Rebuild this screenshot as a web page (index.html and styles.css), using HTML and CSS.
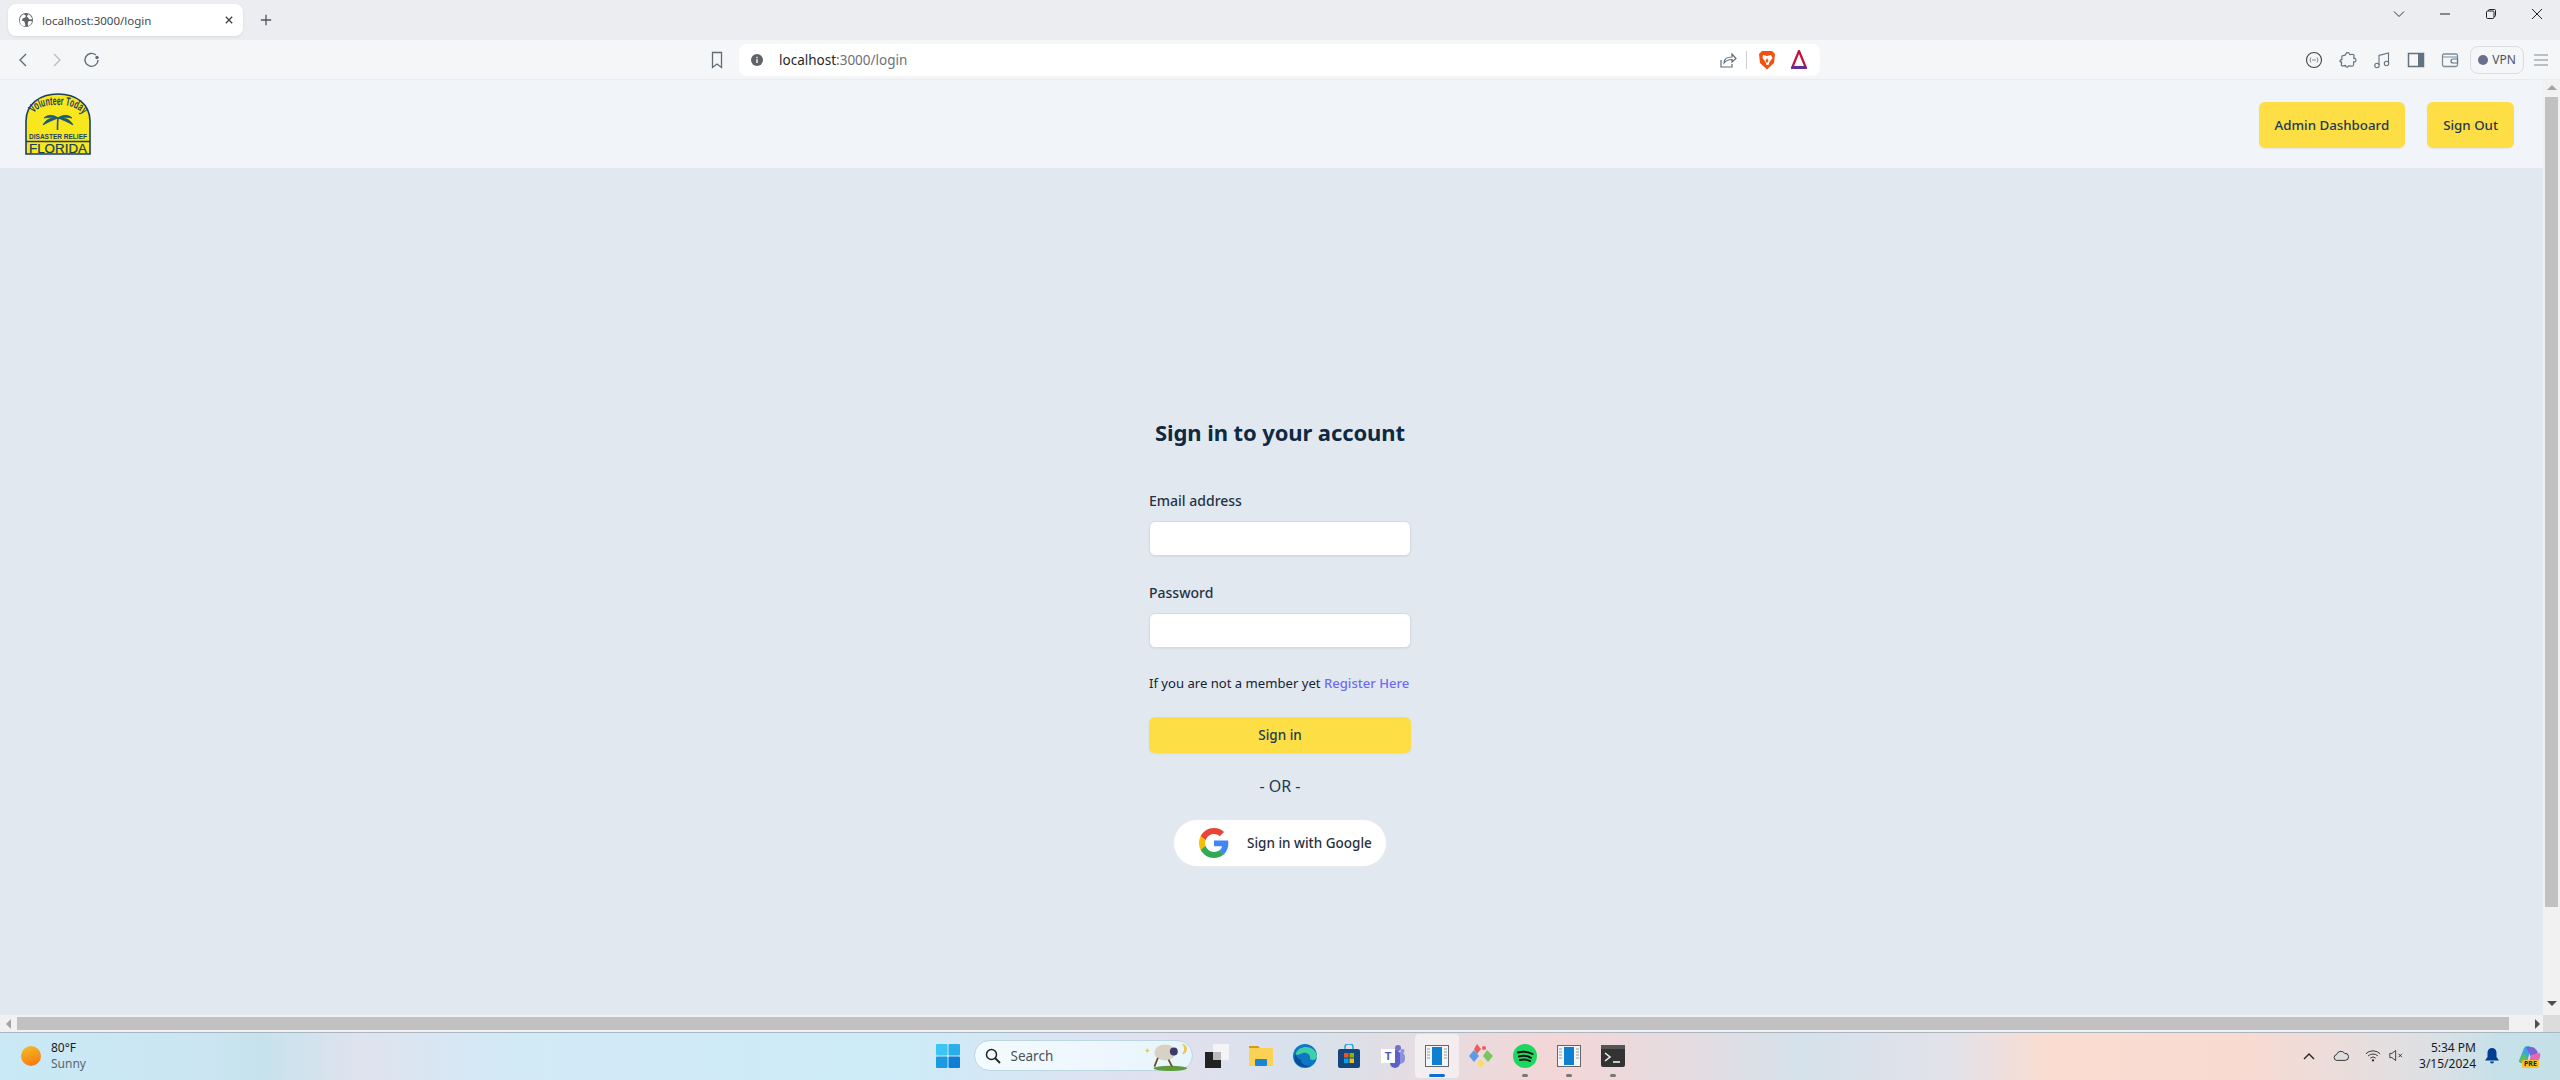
FILE: index.html
```html
<!DOCTYPE html>
<html lang="en">
<head>
<meta charset="utf-8">
<title>localhost:3000/login</title>
<link rel="stylesheet" href="styles.css">
</head>
<body>
<div class="tabstrip">
  <div class="tab">
    <svg class="tab-globe" viewBox="0 0 16 16"><circle cx="8" cy="8" r="8" fill="#5f6368"/><path d="M5.500 1.500L8 3 7 5 4.500 6 3 8.500l3 1 1 3 .5 2.500C5 15.500 2.500 14 1.300 11 .3 7 2 3 5.500 1.500zM10.500 1.500c2.500 1 4 3 4.500 5.500l-3 .5-1.500-2-1.500-1.500zM11 9l4 .5c-.5 2.500-2 4.500-4.500 5.500L10 12z" fill="#fff"/></svg>
    <span class="tab-title">localhost:3000/login</span>
    <svg class="tab-close" viewBox="0 0 10 10"><path d="M1 1l8 8M9 1l-8 8" stroke="#3c4043" stroke-width="1.600"/></svg>
  </div>
  <svg class="tab-new" viewBox="0 0 14 14"><path d="M7 1v12M1 7h12" stroke="#50565c" stroke-width="1.500"/></svg>
  <div class="winctl">
    <svg class="win-btn" viewBox="0 0 12 12"><path d="M1 3.500l5 5 5-5" fill="none" stroke="#333" stroke-width="1"/></svg>
    <svg class="win-btn" viewBox="0 0 12 12"><path d="M1 6h10" stroke="#222" stroke-width="1"/></svg>
    <svg class="win-btn" viewBox="0 0 12 12"><rect x="1.500" y="3" width="7.500" height="7.500" rx="1.200" fill="none" stroke="#222"/><path d="M3.500 3V2.500a1 1 0 011-1H9.500a1 1 0 011 1V7.500a1 1 0 01-1 1H9" fill="none" stroke="#222"/></svg>
    <svg class="win-btn" viewBox="0 0 12 12"><path d="M1 1l10 10M11 1L1 11" stroke="#222" stroke-width="1"/></svg>
  </div>
</div>

<div class="toolbar">
  <svg class="tool-nav tool-back" viewBox="0 0 12 16"><path d="M9 2L3 8l6 6" fill="none" stroke="#5f6c76" stroke-width="1.400"/></svg>
  <svg class="tool-nav tool-fwd" viewBox="0 0 12 16"><path d="M3 2l6 6-6 6" fill="none" stroke="#b8c0c6" stroke-width="1.400"/></svg>
  <svg class="tool-reload" viewBox="0 0 18 18"><path d="M15 9a6.500 6.500 0 11-2.200-5" fill="none" stroke="#5f6c76" stroke-width="1.400"/><circle cx="14" cy="6.500" r="1.700" fill="#5f6c76"/></svg>
  <svg class="tool-bookmark" viewBox="0 0 14 18"><path d="M2.500 1.500h9v15L7 13l-4.500 3.500z" fill="none" stroke="#5f6c76" stroke-width="1.300"/></svg>
  <div class="omnibox">
    <svg class="omni-info" viewBox="0 0 14 14"><circle cx="7" cy="7" r="7" fill="#5f6368"/><rect x="6.200" y="6" width="1.600" height="4.500" fill="#fff"/><rect x="6.200" y="3.300" width="1.600" height="1.600" fill="#fff"/></svg>
    <span class="omni-url"><span class="omni-host">localhost</span>:3000/login</span>
    <svg class="omni-share" viewBox="0 0 18 18"><path d="M2 9v7h11v-3" fill="none" stroke="#5f6c76" stroke-width="1.200"/><path d="M5 12c0-4 3-6 8-6V3l4 4.500L13 11V8.500c-4 0-6 1-8 3.500z" fill="none" stroke="#5f6c76" stroke-width="1.200"/></svg>
    <span class="omni-sep"></span>
    <svg class="omni-brave" viewBox="0 0 18 20"><path d="M4 1h10l3 3-1 9-7 6.500L2 13 1 4z" fill="#f1500f"/><path d="M5 5l4 1 4-1 1.500 3-3 4-1 3H8.500l-1-3-3-4z" fill="#fff"/><path d="M9 8l-1.500 3L9 13l1.500-2z" fill="#f1500f"/></svg>
    <svg class="omni-bat" viewBox="0 0 18 20"><path d="M9 1L2 18h14z" fill="#fff" stroke="#c5103a" stroke-width="2.200" stroke-linejoin="round"/><path d="M2 16h14l1 3H1z" fill="#662d91"/></svg>
  </div>
  <svg class="ext ext-first" viewBox="0 0 18 18"><circle cx="9" cy="9" r="7.500" fill="none" stroke="#444" stroke-width="1.100"/><path d="M6 6.500L5 9l1 2.500M12 6.500L13 9l-1 2.500M7 9h4" fill="none" stroke="#888" stroke-width="1"/></svg>
  <svg class="ext" viewBox="0 0 18 18"><path d="M7 2.500c1-1.500 3.500-1 3.500.8 0 .7 4-.5 4.500.7.500 1-.5 3-.2 3.500 1.700-.5 2.700 1.500 1.700 3-.7 1-2-.3-2 .5 0 1.200.8 3.500-.5 4-1.200.4-3.500-.2-4.500-.2-.5 0 .3 1.200-1.200 1.400-1.500 0-1.800-1.300-1.300-1.800-1.500.5-3.500.7-4.500 0-.5-1 .5-3 0-3.500C1 11.500.5 10 1.500 9c.8-.8 1.500.3 1.500-.5 0-1-.8-3 .2-3.700C4.500 4.300 7 5 7 2.500z" fill="none" stroke="#62737f" stroke-width="1.200"/></svg>
  <svg class="ext" viewBox="0 0 18 18"><path d="M6 14V4.500L15.500 2v10" fill="none" stroke="#62737f" stroke-width="1.100"/><circle cx="4" cy="14.500" r="2.200" fill="none" stroke="#62737f" stroke-width="1.100"/><circle cx="13.500" cy="12.500" r="2.200" fill="none" stroke="#62737f" stroke-width="1.100"/></svg>
  <svg class="ext" viewBox="0 0 18 18"><rect x="1.500" y="2.500" width="15" height="13" fill="none" stroke="#62737f" stroke-width="1.500"/><rect x="11" y="2.500" width="5.500" height="13" fill="#62737f"/></svg>
  <svg class="ext" viewBox="0 0 18 18"><rect x="1.500" y="3" width="15" height="12.500" rx="1.500" fill="none" stroke="#7d8d98" stroke-width="1.300"/><path d="M1.500 6h15" stroke="#7d8d98"/><path d="M16.500 8H12a1.800 1.800 0 000 4h4.500z" fill="#f5f6f8" stroke="#62737f" stroke-width="1.200"/></svg>
  <div class="vpn"><span class="vpn-dot"></span><span class="vpn-label">VPN</span></div>
  <svg class="menu" viewBox="0 0 14 12"><path d="M0 1h14M0 6h14M0 11h14" stroke="#7c8b96" stroke-width="1.100"/></svg>
</div>

<div class="viewport">
  <div class="page-clip">
    <div class="page">
      <header class="nav">
        <svg class="logo" viewBox="0 0 66 62">
          <defs><path id="arc" d="M6 26C10 13 21 12 33 12s23 3 28 15"/></defs>
          <path d="M1 61V28C1 11 15 1 33 1s32 10 32 27v33z" fill="#f8e71c" stroke="#1c3f60" stroke-width="1.600"/>
          <text class="logo-arc"><textPath href="#arc" startOffset="50%" text-anchor="middle" textLength="54" lengthAdjust="spacingAndGlyphs">Volunteer Today</textPath></text>
          <path d="M32.500 37c0-5 0-8 .5-12" stroke="#1e5a6e" stroke-width="1.600" fill="none"/>
          <path d="M33 25c-4-3-10-4-14 0 5-1 9-1 14 0zM33 25c4-3 10-4 14 0-5-1-9-1-14 0zM33 25c-6-1-12 1-15 7 5-3 10-5 15-7zM33 25c6-1 12 1 15 7-5-3-10-5-15-7z" fill="#1e5a6e" stroke="#1e5a6e" stroke-width=".8"/>
          <text class="logo-dr" x="33" y="45.500" text-anchor="middle" textLength="58" lengthAdjust="spacingAndGlyphs">DISASTER RELIEF</text>
          <path d="M1 48.500h64" stroke="#1c3f60" stroke-width="1.500"/>
          <text class="logo-fl" x="33" y="59.500" text-anchor="middle" textLength="58" lengthAdjust="spacingAndGlyphs">FLORIDA</text>
        </svg>
        <div class="nav-actions">
          <a class="btn-nav">Admin Dashboard</a>
          <a class="btn-nav">Sign Out</a>
        </div>
      </header>
      <main class="login">
        <h1 class="login-title">Sign in to your account</h1>
        <form class="login-form">
          <label class="field-label">Email address</label>
          <input class="field-input" type="email">
          <label class="field-label field-label-next">Password</label>
          <input class="field-input" type="password">
          <p class="register">If you are not a member yet <a class="register-link">Register Here</a></p>
          <button class="btn-submit" type="button">Sign in</button>
        </form>
        <p class="or">- OR -</p>
        <button class="btn-google" type="button">
          <svg class="google-g" viewBox="0 0 48 48"><path fill="#EA4335" d="M24 9.500c3.540 0 6.710 1.220 9.210 3.600l6.850-6.850C35.900 2.380 30.470 0 24 0 14.620 0 6.510 5.380 2.560 13.220l7.980 6.190C12.430 13.720 17.740 9.500 24 9.500z"/><path fill="#4285F4" d="M46.980 24.550c0-1.570-.15-3.090-.38-4.550H24v9.020h12.940c-.58 2.960-2.260 5.480-4.780 7.180l7.730 6c4.510-4.180 7.090-10.360 7.090-17.650z"/><path fill="#FBBC05" d="M10.530 28.590c-.48-1.450-.76-2.990-.76-4.590s.27-3.140.76-4.590l-7.980-6.190C.92 16.460 0 20.120 0 24c0 3.880.92 7.540 2.560 10.780l7.970-6.190z"/><path fill="#34A853" d="M24 48c6.480 0 11.930-2.130 15.890-5.810l-7.730-6c-2.150 1.450-4.920 2.300-8.160 2.300-6.260 0-11.570-4.220-13.470-9.910l-7.980 6.190C6.510 42.620 14.620 48 24 48z"/></svg>
          <span>Sign in with Google</span>
        </button>
      </main>
    </div>
    <div class="hscroll">
      <span class="arrow arrow-left"></span>
      <span class="hthumb"></span>
      <span class="arrow arrow-right"></span>
    </div>
  </div>
  <div class="vscroll">
    <span class="arrow arrow-up"></span>
    <span class="vthumb"></span>
    <span class="arrow arrow-down"></span>
    <span class="scroll-corner"></span>
  </div>
</div>

<footer class="taskbar">
  <div class="weather">
    <span class="sun"></span>
    <div class="weather-text"><span class="temp">80°F</span><span class="cond">Sunny</span></div>
  </div>
  <div class="dock">
    <svg class="start" viewBox="0 0 24 24"><rect x="0" y="0" width="11.500" height="11.500" rx="1" fill="#3cc4f4"/><rect x="12.500" y="0" width="11.500" height="11.500" rx="1" fill="#2aaeea"/><rect x="0" y="12.500" width="11.500" height="11.500" rx="1" fill="#1b9ae4"/><rect x="12.500" y="12.500" width="11.500" height="11.500" rx="1" fill="#0f7fd6"/></svg>
    <div class="search">
      <svg class="search-icon" viewBox="0 0 16 16"><circle cx="6.500" cy="6.500" r="5" fill="none" stroke="#222" stroke-width="1.500"/><path d="M10 10l5 5" stroke="#222" stroke-width="1.800"/></svg>
      <span class="search-text">Search</span>
      <svg class="search-art" viewBox="0 0 52 34"><ellipse cx="32" cy="31" rx="19" ry="3" fill="#5f9a3c"/><ellipse cx="26" cy="13" rx="12" ry="9" fill="#d8d2c6"/><circle cx="36" cy="12" r="4.500" fill="#3c3a66"/><path d="M18 19l-4 10M30 21l4 8" stroke="#6b4a2b" stroke-width="2"/><path d="M45 3a6 6 0 010 12 8 8 0 000-12z" fill="#e9c75c"/><path d="M6 8l1 2 2 1-2 1-1 2-1-2-2-1 2-1z" fill="#e9c75c"/></svg>
    </div>
    <div class="dock-items">
      <span class="dock-item"><svg class="dock-icon" viewBox="0 0 24 24"><rect x="8" y="0" width="16" height="16" fill="#f4f4f4"/><rect x="0" y="8" width="16" height="16" fill="#222"/><rect x="8" y="8" width="8" height="8" fill="#bbb"/></svg></span>
      <span class="dock-item"><svg class="dock-icon" viewBox="0 0 24 24"><path d="M0 2h9l2 2h-11z" fill="#d99a14"/><rect x="0" y="4" width="24" height="18" rx="1" fill="#fcd255"/><rect x="6" y="15" width="12" height="7" rx="1" fill="#1b86cf"/></svg></span>
      <span class="dock-item"><svg class="dock-icon" viewBox="0 0 24 24"><circle cx="12" cy="12" r="12" fill="#0e78c4"/><path d="M3 9c3-8 19-9 21 3 0 4-5 5-7 3 1-4-3-7-7-6S3 13 3 9z" fill="#3fd0a8"/><path d="M8 16c0 4 5 7 11 5-5 3-12 3-16-2-2-3-2-7 0-9 0 3 2 5 5 6z" fill="#0a4f9e"/></svg></span>
      <span class="dock-item"><svg class="dock-icon" viewBox="0 0 24 24"><path d="M8 5V3a3 3 0 013-3h2a3 3 0 013 3v2" fill="none" stroke="#2ba4e0" stroke-width="1.500"/><rect x="1" y="5" width="22" height="19" rx="2" fill="#12477e"/><rect x="7" y="9" width="4.500" height="4.500" fill="#f25022"/><rect x="12.500" y="9" width="4.500" height="4.500" fill="#7fba00"/><rect x="7" y="14.500" width="4.500" height="4.500" fill="#00a4ef"/><rect x="12.500" y="14.500" width="4.500" height="4.500" fill="#ffb900"/></svg></span>
      <span class="dock-item"><svg class="dock-icon" viewBox="0 0 24 24"><circle cx="17" cy="4" r="3" fill="#6f74cc"/><circle cx="21.500" cy="7" r="2" fill="#8b8fdc"/><rect x="13" y="8" width="11" height="12" rx="5" fill="#8b8fdc"/><rect x="9" y="6" width="10" height="18" rx="5" fill="#5b5fc7"/><rect x="0" y="5" width="14" height="14" fill="#fff"/><text class="teams-t" x="7" y="16" text-anchor="middle">T</text></svg></span>
      <span class="dock-item dock-active"><svg class="dock-icon" viewBox="0 0 24 24"><rect x=".5" y="1.500" width="23" height="21" fill="#f3f6f8" stroke="#666"/><rect x="7" y="3" width="10" height="18" fill="#0f7fd0"/><path d="M2 5h3M2 8h3M2 11h3M2 14h3M19 5h3M19 8h3M19 11h3M19 14h3" stroke="#999"/></svg><span class="dock-bar"></span></span>
      <span class="dock-item"><svg class="dock-icon" viewBox="0 0 24 24"><path d="M8 0l4 5-4 5-3-5z" fill="#e85d5d"/><path d="M5 6l5 6-5 6-5-6z" fill="#5b9be8"/><path d="M18 6l6 6-5 6-5-6z" fill="#7bc65b"/><path d="M11 15l5 4-4 5-4-5z" fill="#f7de62"/><circle cx="15" cy="4" r="2" fill="#e85d5d"/></svg></span>
      <span class="dock-item"><svg class="dock-icon" viewBox="0 0 24 24"><circle cx="12" cy="12" r="12" fill="#1ed760"/><path d="M5 8.500c5-1.500 10-1 14.500 1.500M6 12.500c4-1.200 8.500-.8 12 1.300M7 16c3.500-1 7-.7 10 1" fill="none" stroke="#111" stroke-width="2" stroke-linecap="round"/></svg><span class="dock-dot"></span></span>
      <span class="dock-item"><svg class="dock-icon" viewBox="0 0 24 24"><rect x=".5" y="1.500" width="23" height="21" fill="#f3f6f8" stroke="#666"/><rect x="7" y="3" width="10" height="18" fill="#0f7fd0"/><path d="M2 5h3M2 8h3M2 11h3M2 14h3M19 5h3M19 8h3M19 11h3M19 14h3" stroke="#999"/></svg><span class="dock-dot"></span></span>
      <span class="dock-item"><svg class="dock-icon" viewBox="0 0 24 24"><rect y="1" width="24" height="22" rx="2" fill="#333"/><rect y="1" width="24" height="4" fill="#555"/><path d="M4 9l5 4-5 4" fill="none" stroke="#eee" stroke-width="1.600"/><path d="M12 18h7" stroke="#eee" stroke-width="1.600"/></svg><span class="dock-dot"></span></span>
    </div>
  </div>
  <div class="tray">
    <svg class="tray-chev" viewBox="0 0 12 8"><path d="M1 7l5-5 5 5" fill="none" stroke="#222" stroke-width="1.400"/></svg>
    <svg class="tray-cloud" viewBox="0 0 18 12"><path d="M4 11.500a3.300 3.300 0 010-6.500 5 5 0 019-1.500 4 4 0 011 8z" fill="#ddd" stroke="#222"/></svg>
    <svg class="tray-wifi" viewBox="0 0 18 14"><path d="M1 5a11.500 11.500 0 0116 0M3.500 7.500a8 8 0 0111 0M6 10a4.300 4.300 0 016 0" fill="none" stroke="#222"/><circle cx="9" cy="12.500" r="1.200" fill="#222"/></svg>
    <svg class="tray-vol" viewBox="0 0 18 14"><path d="M1 4.500h2.500L8 1v12L3.500 9.500H1z" fill="none" stroke="#222"/><path d="M11.500 5l4 4M15.500 5l-4 4" stroke="#222"/></svg>
    <div class="clock"><span>5:34 PM</span><span>3/15/2024</span></div>
    <svg class="tray-bell" viewBox="0 0 14 16"><path d="M7 0a4.500 4.500 0 00-4.500 4.500V9L0 12.500h14L11.500 9V4.500A4.500 4.500 0 007 0zM5 13.500a2 2 0 004 0z" fill="#003e92"/></svg>
    <div class="copilot">
      <svg class="copilot-art" viewBox="0 0 24 20"><path d="M2 16L7 3c1-2 6-3 7 0l-4 14c-1 2-8 2-8-1z" fill="#36a5e0"/><path d="M9 2h6c2 0 5 3 6 6l-7 4z" fill="#7d62d8"/><path d="M14 10l9-2c1 4-1 9-5 9h-6z" fill="#e668b0"/><path d="M2 16l5-8 4 6-3 4H4z" fill="#5cc05a"/></svg>
      <span class="pre">PRE</span>
    </div>
  </div>
</footer>
</body>
</html>
```

FILE: styles.css
```css
* { box-sizing: border-box; }
html, body { margin: 0; height: 100%; overflow: hidden; }
body {
  display: flex;
  flex-direction: column;
  height: 1080px;
  font-family: "Noto Sans", "Open Sans", sans-serif;
  color: #0f2942;
}
svg { display: block; flex: none; }

/* tab strip */
.tabstrip {
  height: 40px;
  background: #ebedf0;
  display: flex;
  align-items: flex-start;
  flex: none;
}
.tab {
  width: 235px;
  height: 32px;
  margin: 4px 0 0 8px;
  background: #fff;
  border-radius: 8px;
  display: flex;
  align-items: center;
  box-shadow: 0 1px 3px rgba(0, 0, 0, .08);
}
.tab-globe { width: 14px; height: 14px; margin-left: 11px; flex: none; }
.tab-title { font-size: 11.500px; color: #45494e; margin-left: 9px; width: 183px; flex: none; white-space: nowrap; }
.tab-close { width: 8px; height: 8px; flex: none; }
.tab-new { width: 12px; height: 12px; margin: 14px 0 0 17px; }
.winctl { margin-left: auto; display: flex; gap: 34px; padding: 8px 17px 0 0; }
.win-btn { width: 12px; height: 12px; }

/* toolbar */
.toolbar {
  height: 40px;
  flex: none;
  background: #f5f6f8;
  border-bottom: 1px solid #e8ecef;
  display: flex;
  align-items: center;
}
.tool-nav { width: 12px; height: 16px; }
.tool-back { margin-left: 17px; }
.tool-fwd { margin-left: 22px; }
.tool-reload { width: 18px; height: 18px; margin-left: 20px; }
.tool-bookmark { width: 14px; height: 18px; margin-left: 609px; }
.omnibox {
  width: 1081px;
  height: 32px;
  margin-left: 15px;
  background: #fff;
  border-radius: 8px;
  display: flex;
  align-items: center;
}
.omni-info { width: 12px; height: 12px; margin-left: 12px; }
.omni-url { font-size: 13.500px; color: #6c7278; margin-left: 16px; width: 820px; }
.omni-host { color: #26292c; }
.omni-share { width: 18px; height: 18px; margin-left: 120px; }
.omni-sep { width: 1px; height: 18px; background: #c8cdd1; margin-left: 9px; }
.omni-brave { width: 18px; height: 20px; margin-left: 11px; }
.omni-bat { width: 18px; height: 20px; margin-left: 14px; }
.ext { width: 18px; height: 18px; margin-left: 16px; }
.ext-first { margin-left: 485px; }
.vpn {
  width: 54px;
  height: 28px;
  margin-left: 11px;
  border: 1px solid #d9dde1;
  border-radius: 8px;
  display: flex;
  align-items: center;
  justify-content: center;
  gap: 4px;
}
.vpn-dot { width: 10px; height: 10px; border-radius: 50%; background: #6a6f8c; }
.vpn-label { font-size: 12px; color: #4a5560; }
.menu { width: 14px; height: 12px; margin-left: 10px; }

/* viewport */
.viewport { flex: 1; display: flex; min-height: 0; }
.page-clip {
  flex: 1;
  min-width: 0;
  display: flex;
  flex-direction: column;
}
.page {
  flex: 1;
  min-height: 0;
  overflow: hidden;
  background: #e2e8f0;
}
.nav {
  width: 2560px;
  height: 88px;
  background: #f1f5f9;
  display: flex;
  align-items: center;
  justify-content: space-between;
  padding: 0 46px 0 25px;
}
.logo { width: 66px; height: 62px; }
.logo-arc { font: 700 12px "Liberation Sans", sans-serif; fill: #1c3f60; }
.logo-dr { font: 700 8px "Liberation Sans", sans-serif; fill: #1c3f60; }
.logo-fl { font: 400 12.500px "Liberation Sans", sans-serif; fill: #1c3f60; stroke: #1c3f60; stroke-width: .25px; }
.nav-actions { display: flex; gap: 22px; margin-top: 2px; }
.btn-nav {
  height: 46px;
  padding: 0 16px;
  display: flex;
  align-items: center;
  font-size: 13.300px;
  font-weight: 500;
  color: #1e3a52;
  background: #fddf45;
  border-radius: 6px;
  box-shadow: 0 1px 2px rgba(0, 0, 0, .06);
}

.login {
  width: 2560px;
  display: flex;
  flex-direction: column;
  align-items: center;
  padding-top: 247px;
}
.login-title {
  margin: 0;
  font-size: 22px;
  line-height: 34px;
  font-weight: 700;
  letter-spacing: -.1px;
  color: #0f2942;
}
.login-form { width: 262px; display: flex; flex-direction: column; margin-top: 42px; }
.field-label { font-size: 14px; line-height: 20px; font-weight: 500; color: #1f3347; }
.field-label-next { margin-top: 27px; }
.field-input {
  height: 35px;
  margin-top: 10px;
  border: 1px solid #d5dae2;
  border-radius: 6px;
  background: #fff;
  box-shadow: 0 1px 2px rgba(0, 0, 0, .05);
}
.register { margin: 25px 0 0; font-size: 13.100px; line-height: 20px; color: #1a2230; white-space: nowrap; }
.register-link { font-weight: 500; color: #6d6cf5; }
.btn-submit {
  height: 36px;
  margin-top: 24px;
  border: 0;
  border-radius: 6px;
  background: #fddf45;
  font: 500 13.500px "Noto Sans", sans-serif;
  color: #1e3a52;
  box-shadow: 0 1px 2px rgba(0, 0, 0, .06);
}
.or { margin: 22px 0 0; font-size: 16px; line-height: 22px; color: #1e3a52; }
.btn-google {
  width: 214px;
  height: 48px;
  margin-top: 22px;
  border: 1px solid #e6e9ee;
  border-radius: 24px;
  background: #fff;
  display: flex;
  align-items: center;
  padding: 0 0 0 25px;
  gap: 18px;
  font: 500 13.500px "Noto Sans", sans-serif;
  color: #2a2f3d;
  white-space: nowrap;
}
.google-g { width: 30px; height: 30px; }

/* scrollbars */
.hscroll {
  height: 17px;
  flex: none;
  background: #f1f1f1;
  display: flex;
  align-items: center;
}
.hthumb { height: 13px; width: 2492px; background: #c1c1c1; margin-left: 6px; }
.vscroll {
  width: 17px;
  flex: none;
  background: #f1f1f1;
  display: flex;
  flex-direction: column;
  align-items: center;
  padding-top: 5px;
}
.vthumb { width: 13px; height: 810px; background: #c1c1c1; margin-top: 7px; }
.scroll-corner { width: 17px; height: 17px; background: #dcdcdc; margin-top: 4px; }
.arrow { width: 0; height: 0; display: block; flex: none; }
.arrow-up { border: 5px solid transparent; border-top: 0; border-bottom: 5px solid #a3a3a3; }
.arrow-down { border: 5px solid transparent; border-bottom: 0; border-top: 5px solid #505050; margin-top: auto; margin-bottom: 5px; }
.arrow-left { border: 5px solid transparent; border-left: 0; border-right: 5px solid #a3a3a3; margin-left: 6px; }
.arrow-right { border: 5px solid transparent; border-right: 0; border-left: 5px solid #505050; margin-left: auto; margin-right: 3px; }

/* taskbar */
.taskbar {
  height: 48px;
  flex: none;
  border-top: 1px solid #aab7c3;
  background: linear-gradient(90deg, #c9e9f6 0, #cbe6f2 200px, #c6e2ec 260px, #dfe3ee 360px, #d3e9f6 500px, #cdebf8 900px, #e2e0ee 1170px, #d8e2ec 1300px, #f4d6d6 1560px, #d5e1ea 1800px, #e2e2ea 1950px, #fadcd0 2050px, #f8dad2 2250px, #dde0e4 2430px, #c6e1e9 2500px, #c6e0e8 2560px);
  display: grid;
  grid-template-columns: 1fr auto 1fr;
  align-items: center;
  padding-bottom: 2px;
}
.weather { display: flex; align-items: center; padding-left: 21px; gap: 10px; }
.sun {
  width: 20px;
  height: 20px;
  border-radius: 50%;
  background: linear-gradient(160deg, #f5c02a, #f5730e);
}
.weather-text { display: flex; flex-direction: column; font-size: 12px; line-height: 16px; }
.temp { color: #1b1b1b; }
.cond { color: #5a6570; }
.dock { display: flex; align-items: center; margin-left: 10px; }
.start { width: 24px; height: 24px; }
.search {
  width: 219px;
  height: 31px;
  margin-left: 14px;
  border-radius: 16px;
  background: linear-gradient(90deg, #f4fbff, #e8f4fb);
  border: 1px solid #bcd6e4;
  display: flex;
  align-items: center;
  padding-left: 10px;
}
.search-icon { width: 16px; height: 16px; }
.search-text { font-size: 13.500px; color: #4c5156; margin-left: 10px; }
.search-art { width: 48px; height: 30px; margin-left: auto; margin-right: 3px; }
.dock-items { display: flex; margin-left: 2px; }
.dock-item {
  width: 44px;
  height: 44px;
  display: flex;
  align-items: center;
  justify-content: center;
  position: relative;
}
.dock-active { background: rgba(255, 255, 255, .5); border-radius: 4px; }
.dock-icon { width: 24px; height: 24px; }
.teams-t { font: 700 11px "Liberation Sans", sans-serif; fill: #4b53bc; }
.dock-bar {
  position: absolute;
  left: 14px;
  bottom: 1px;
  width: 16px;
  height: 3px;
  border-radius: 2px;
  background: #0f6cd0;
}
.dock-dot {
  position: absolute;
  left: 19px;
  bottom: 1px;
  width: 6px;
  height: 3px;
  border-radius: 2px;
  background: #777;
}
.tray { display: flex; align-items: center; justify-content: flex-end; }
.tray-chev { width: 12px; height: 8px; }
.tray-cloud { width: 16px; height: 11px; margin-left: 18px; }
.tray-wifi { width: 16px; height: 13px; margin-left: 16px; }
.tray-vol { width: 15px; height: 13px; margin-left: 8px; }
.clock {
  display: flex;
  flex-direction: column;
  align-items: flex-end;
  font-size: 12px;
  line-height: 16px;
  color: #1b1b1b;
  margin-left: 15px;
}
.tray-bell { width: 14px; height: 16px; margin-left: 9px; }
.copilot { width: 24px; height: 22px; margin: 0 19px 0 18px; position: relative; }
.copilot-art { width: 24px; height: 20px; }
.pre {
  position: absolute;
  left: 5px;
  bottom: -1px;
  padding: 0 2px;
  font-size: 7px;
  line-height: 8px;
  font-weight: 700;
  color: #222;
  background: #f7c325;
  border-radius: 2px;
}
```
